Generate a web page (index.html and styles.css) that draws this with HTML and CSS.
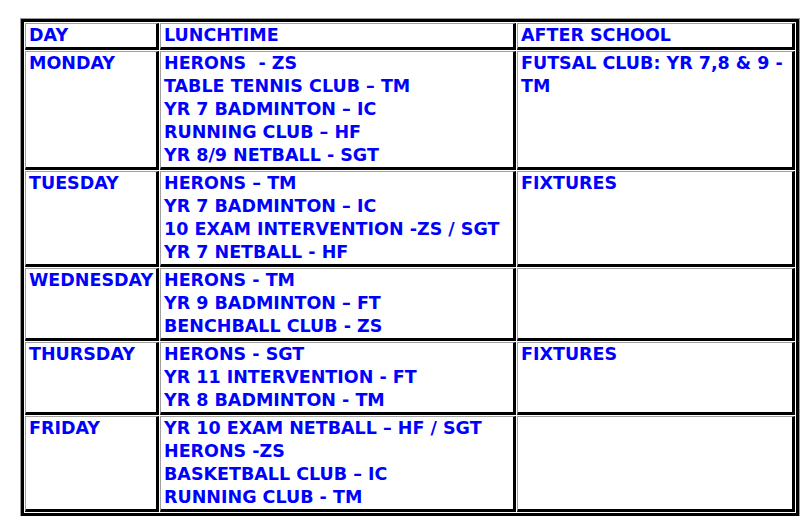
FILE: index.html
```html
<!DOCTYPE html>
<html>
<head>
<meta charset="utf-8">
<link rel="stylesheet" href="styles.css">
</head>
<body>
<div class="page">
<table class="timetable">
  <colgroup>
    <col class="c-day">
    <col class="c-lunch">
    <col class="c-after">
  </colgroup>
  <tr>
    <td>DAY</td>
    <td>LUNCHTIME</td>
    <td>AFTER SCHOOL</td>
  </tr>
  <tr>
    <td>MONDAY</td>
    <td>HERONS&nbsp; - ZS<br>TABLE TENNIS CLUB – TM<br>YR 7 BADMINTON – IC<br>RUNNING CLUB – HF<br>YR 8/9 NETBALL - SGT</td>
    <td>FUTSAL CLUB: YR 7,8 &amp; 9 -<br>TM</td>
  </tr>
  <tr>
    <td>TUESDAY</td>
    <td>HERONS – TM<br>YR 7 BADMINTON – IC<br>10 EXAM INTERVENTION -ZS / SGT<br>YR 7 NETBALL - HF</td>
    <td>FIXTURES</td>
  </tr>
  <tr>
    <td>WEDNESDAY</td>
    <td>HERONS - TM<br>YR 9 BADMINTON – FT<br>BENCHBALL CLUB - ZS</td>
    <td></td>
  </tr>
  <tr>
    <td>THURSDAY</td>
    <td>HERONS - SGT<br>YR 11 INTERVENTION - FT<br>YR 8 BADMINTON - TM</td>
    <td>FIXTURES</td>
  </tr>
  <tr>
    <td>FRIDAY</td>
    <td>YR 10 EXAM NETBALL – HF / SGT<br>HERONS -ZS<br>BASKETBALL CLUB – IC<br>RUNNING CLUB - TM</td>
    <td></td>
  </tr>
</table>
</div>
</body>
</html>
```

FILE: styles.css
```css
html, body {
  margin: 0;
  padding: 0;
  background: #ffffff;
}

.page {
  padding: 19px 0 0 21px;
}

.timetable {
  table-layout: fixed;
  width: 777px;
  border-collapse: separate;
  border-spacing: 1px;
  border: 3px solid #000;
  box-shadow: 0 0 0 1px #9a9a9a;
  font-family: "DejaVu Sans", Verdana, sans-serif;
  font-weight: bold;
  font-size: 17.5px;
  line-height: 23px;
  color: #0000ff;
}

.c-day { width: 134px; }
.c-lunch { width: 356px; }
.c-after { width: 278px; }

.timetable td {
  vertical-align: top;
  white-space: nowrap;
  padding: 0 2px 0 3px;
  border-top: 1px solid #a0a0a0;
  border-left: 1px solid #a0a0a0;
  border-right: 3px solid #000;
  border-bottom: 3px solid #000;
  overflow: hidden;
}
```
